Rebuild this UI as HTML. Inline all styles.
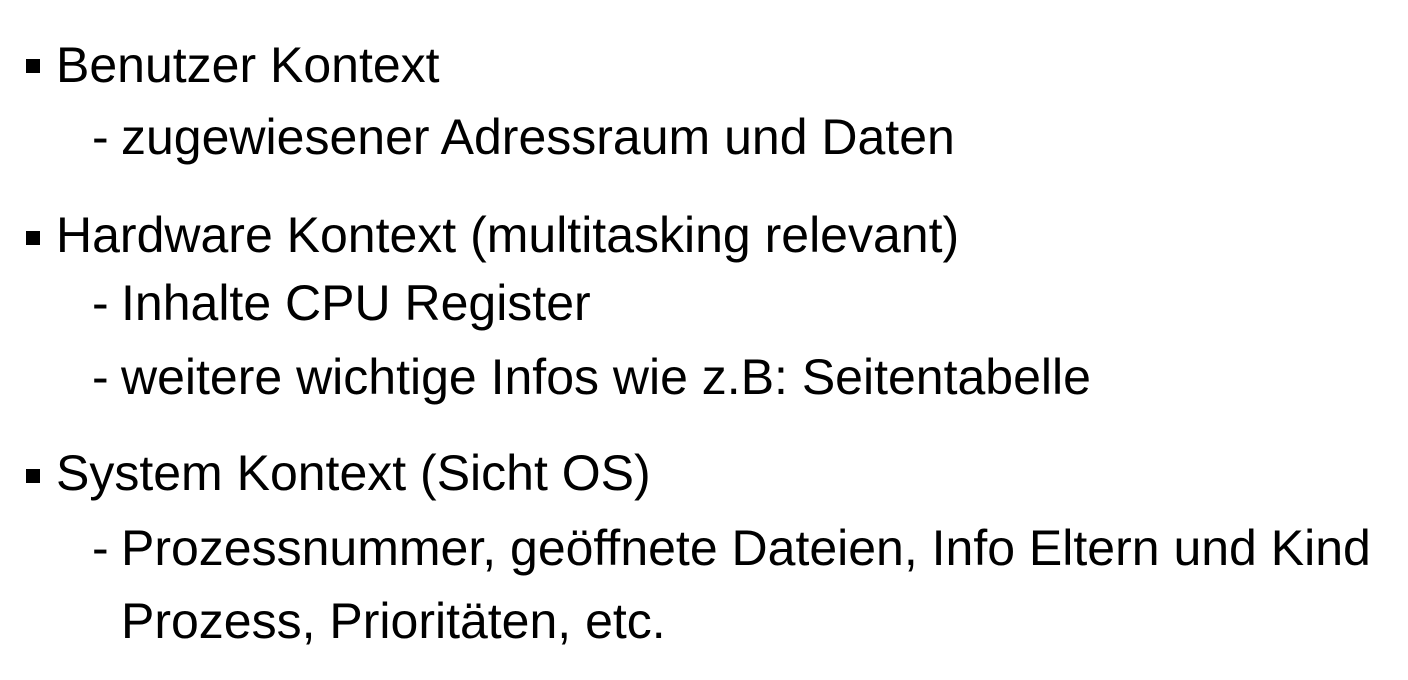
<!DOCTYPE html>
<html><head><meta charset="utf-8"><style>
html,body{margin:0;padding:0;background:#fff;}
body{width:1408px;height:680px;position:relative;overflow:hidden;font-family:"Liberation Sans",sans-serif;font-size:50px;color:#000;}
.l{position:absolute;white-space:nowrap;line-height:50px;height:50px;}
.b{position:absolute;width:14px;height:14px;background:#000;left:26px;}
.d{position:absolute;left:92px;line-height:50px;}
</style></head><body>
<div class="b" style="top:59px"></div>
<div class="l" style="left:56px;top:40px">Benutzer Kontext</div>
<div class="d" style="top:112px">-</div>
<div class="l" style="left:121px;top:112px">zugewiesener Adressraum und Daten</div>
<div class="b" style="top:231px"></div>
<div class="l" style="left:56px;top:210px">Hardware Kontext (multitasking relevant)</div>
<div class="d" style="top:278px">-</div>
<div class="l" style="left:121px;top:278px">Inhalte CPU Register</div>
<div class="d" style="top:352px">-</div>
<div class="l" style="left:121px;top:352px">weitere wichtige Infos wie z.B: Seitentabelle</div>
<div class="b" style="top:469px"></div>
<div class="l" style="left:56px;top:448px">System Kontext (Sicht OS)</div>
<div class="d" style="top:523px">-</div>
<div class="l" style="left:121px;top:523px">Prozessnummer, geöffnete Dateien, Info Eltern und Kind</div>
<div class="l" style="left:121px;top:596px">Prozess, Prioritäten, etc.</div>
</body></html>
